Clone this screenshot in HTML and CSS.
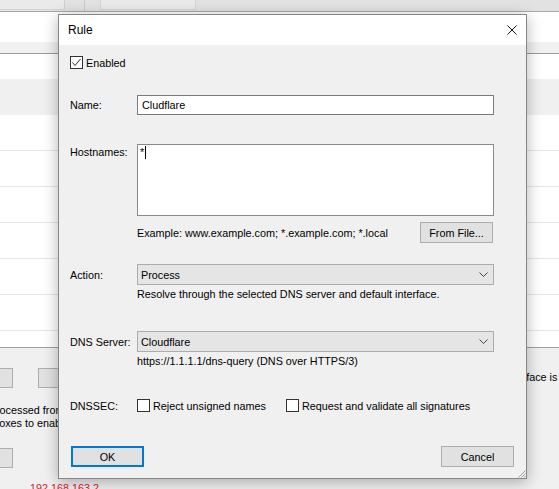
FILE: index.html
```html
<!DOCTYPE html>
<html>
<head>
<meta charset="utf-8">
<title>Rule</title>
<link rel="stylesheet" href="styles.css">
</head>
<body>
<div class="app">
  <div class="tabs">
    <div class="tab tab-a"></div>
    <div class="tab-sep"></div>
    <div class="tab tab-b"></div>
  </div>
  <div class="toolbar"></div>
  <div class="list-head"></div>
  <div class="row-first"></div>
  <div class="row-alt"></div>
  <div class="row"></div>
  <div class="row"></div>
  <div class="row"></div>
  <div class="row"></div>
  <div class="row"></div>
  <div class="row"></div>
  <div class="list-end"></div>
  <div class="panel">
    <div class="panel-left">
      <div class="pbtn-row">
        <div class="pbtn pbtn-cut"></div>
        <div class="pbtn"></div>
      </div>
      <div class="ptext-wrap">
        <div class="ptext ptext-1">processed from</div>
        <div class="ptext ptext-2">checkboxes to enable</div>
      </div>
      <div class="pbtn pbtn-cut pbtn-low"></div>
      <div class="ip">192.168.163.2</div>
    </div>
    <div class="panel-right">Default interface is currently set</div>
  </div>
</div>

<div class="dialog">
  <div class="titlebar">
    <span class="title">Rule</span>
    <svg class="close" width="10" height="10" viewBox="0 0 10 10"><path d="M0.5 0.5 L9.5 9.5 M9.5 0.5 L0.5 9.5" stroke="#111" stroke-width="1" fill="none"/></svg>
  </div>
  <div class="dbody">
    <div class="check-row">
      <span class="cb"><svg width="13" height="13" viewBox="0 0 13 13"><polyline points="2.5,6.5 5,9.5 10.5,3" fill="none" stroke="#333" stroke-width="1"/></svg></span>
      <span>Enabled</span>
    </div>
    <div class="frow name-row">
      <span class="lbl">Name:</span>
      <div class="input">Cludflare</div>
    </div>
    <div class="frow host-row">
      <span class="lbl lbl-top">Hostnames:</span>
      <div class="textarea"><span>*</span><span class="caret"></span></div>
    </div>
    <div class="hint-row">
      <span>Example: www.example.com; *.example.com; *.local</span>
      <div class="btn btn-file">From File...</div>
    </div>
    <div class="frow action-row">
      <span class="lbl">Action:</span>
      <div class="select"><span>Process</span><svg class="chev" width="9" height="5" viewBox="0 0 9 5"><polyline points="0.5,0.5 4.5,4.5 8.5,0.5" fill="none" stroke="#444" stroke-width="1"/></svg></div>
    </div>
    <div class="desc">Resolve through the selected DNS server and default interface.</div>
    <div class="frow dns-row">
      <span class="lbl">DNS Server:</span>
      <div class="select"><span>Cloudflare</span><svg class="chev" width="9" height="5" viewBox="0 0 9 5"><polyline points="0.5,0.5 4.5,4.5 8.5,0.5" fill="none" stroke="#444" stroke-width="1"/></svg></div>
    </div>
    <div class="desc">https://1.1.1.1/dns-query (DNS over HTTPS/3)</div>
    <div class="frow dnssec-row">
      <span class="lbl">DNSSEC:</span>
      <div class="cgroup cgroup-1"><span class="cb"></span><span>Reject unsigned names</span></div>
      <div class="cgroup"><span class="cb"></span><span>Request and validate all signatures</span></div>
    </div>
    <div class="buttons">
      <div class="btn btn-ok">OK</div>
      <div class="btn">Cancel</div>
    </div>
  </div>
  <svg class="grip" width="9" height="9" viewBox="0 0 9 9"><path d="M8.5 1.5 L1.5 8.5 M8.5 4.5 L4.5 8.5 M8.5 7 L7 8.5" stroke="#a0a0a0" stroke-width="1" fill="none"/></svg>
</div>
</body>
</html>
```

FILE: styles.css
```css
html, body {
  margin: 0;
  padding: 0;
}
body {
  width: 559px;
  height: 489px;
  overflow: hidden;
  position: relative;
  font-family: "Liberation Sans", Arial, sans-serif;
  font-size: 10.8px;
  color: #000;
  background: #f0f0f0;
}

/* background application window */
.app {
  width: 559px;
  height: 489px;
  display: flex;
  flex-direction: column;
}
.tabs {
  height: 11px;
  background: #e2e2e2;
  border-bottom: 1px solid #a8a8a8;
  display: flex;
  flex: none;
}
.tab {
  height: 9px;
  background: #eaeaea;
  border-bottom: 1px solid #d6d6d6;
}
.tab-a { width: 64px; border-right: 1px solid #d0d0d0; }
.tab-sep { width: 1px; height: 11px; margin-left: 19px; background: #c9c9c9; }
.tab-b { width: 94px; margin-left: 15px; border-left: 1px solid #d6d6d6; border-right: 1px solid #d6d6d6; }
.toolbar { height: 30px; background: #fff; flex: none; }
.list-head {
  height: 11px;
  background: #f1f1f1;
  border-bottom: 1px solid #9a9a9a;
  flex: none;
}
.row-first { height: 25px; background: #fff; flex: none; }
.row-alt { height: 36px; background: #f0f0f0; flex: none; }
.row {
  height: 36px;
  box-sizing: border-box;
  background: #fff;
  border-bottom: 1px solid #e6e6e6;
  flex: none;
}
.list-end { height: 16px; background: #fff; flex: none; }
.panel {
  flex: 1;
  border-top: 1px solid #a0a0a0;
  background: #f0f0f0;
  display: flex;
}
.panel-left {
  width: 468px;
  flex: none;
  padding-top: 20px;
  display: flex;
  flex-direction: column;
}
.pbtn-row { display: flex; gap: 25px; }
.pbtn {
  width: 75px;
  height: 20px;
  box-sizing: border-box;
  background: #e1e1e1;
  border: 1px solid #adadad;
}
.pbtn-cut { margin-left: -62px; }
.ptext-wrap {
  width: 58px;
  overflow: hidden;
  margin-top: 16px;
}
.ptext { line-height: 13px; white-space: nowrap; }
.ptext-1 { margin-left: -10px; }
.ptext-2 { margin-left: -35px; }
.pbtn-low { margin-top: 18px; }
.ip {
  margin-top: 14px;
  margin-left: 30px;
  line-height: 13px;
  color: #e0161b;
}
.panel-right {
  margin-top: 23px;
  line-height: 13px;
  white-space: nowrap;
}

/* dialog window */
.dialog {
  position: absolute;
  left: 58px;
  top: 14px;
  width: 469px;
  height: 465px;
  box-sizing: border-box;
  border: 1px solid #878787;
  background: #f0f0f0;
  box-shadow: 0 3px 14px rgba(0, 0, 0, 0.30);
  display: flex;
  flex-direction: column;
}
.titlebar {
  height: 30px;
  flex: none;
  background: #fff;
  display: flex;
  align-items: center;
  justify-content: space-between;
  padding: 0 9px;
}
.title { font-size: 12px; }
.close { display: block; margin-top: -1px; }
.dbody {
  flex: 1;
  padding: 11px 12px 0 11px;
  display: flex;
  flex-direction: column;
}
.check-row {
  height: 13px;
  display: flex;
  align-items: center;
  gap: 3px;
}
.cb {
  width: 13px;
  height: 13px;
  box-sizing: border-box;
  border: 1px solid #333;
  background: #fff;
  flex: none;
  position: relative;
}
.cb svg { position: absolute; left: -1px; top: -1px; }
.frow { display: flex; align-items: center; }
.lbl { width: 67px; flex: none; white-space: nowrap; }
.name-row { margin-top: 26px; height: 20px; }
.input {
  width: 357px;
  height: 20px;
  box-sizing: border-box;
  border: 1px solid #7a7a7a;
  background: #fff;
  padding-left: 4px;
  display: flex;
  align-items: center;
}
.host-row { margin-top: 29px; height: 72px; align-items: flex-start; }
.lbl-top { line-height: 14px; padding-top: 1px; }
.textarea {
  width: 357px;
  height: 72px;
  box-sizing: border-box;
  border: 1px solid #8a8a8a;
  background: #fff;
  padding: 1px 2px;
  line-height: 13px;
  display: flex;
  align-items: flex-start;
}
.caret {
  width: 1px;
  height: 13px;
  background: #000;
  margin-left: 1px;
}
.hint-row {
  margin-top: 6px;
  height: 21px;
  width: 424px;
  box-sizing: border-box;
  padding-left: 67px;
  display: flex;
  align-items: center;
  justify-content: space-between;
}
.btn {
  width: 73px;
  height: 21px;
  box-sizing: border-box;
  background: #e1e1e1;
  border: 1px solid #adadad;
  display: flex;
  align-items: center;
  justify-content: center;
}
.btn-file { margin-right: 1px; }
.action-row { margin-top: 21px; height: 21px; }
.dns-row { margin-top: 30px; height: 21px; }
.select {
  width: 357px;
  height: 21px;
  box-sizing: border-box;
  background: #e5e5e5;
  border: 1px solid #acacac;
  padding: 0 5px 0 3px;
  display: flex;
  align-items: center;
  justify-content: space-between;
}
.chev { display: block; }
.desc {
  margin-top: 2px;
  margin-left: 67px;
  line-height: 14px;
  white-space: nowrap;
}
.dnssec-row { margin-top: 31px; height: 13px; }
.cgroup {
  display: flex;
  align-items: center;
  gap: 3px;
  white-space: nowrap;
}
.cgroup-1 { width: 149px; flex: none; }
.buttons {
  margin-top: 34px;
  display: flex;
  justify-content: space-between;
}
.btn-ok {
  margin-left: 1px;
  border: 2px solid #0078d7;
}
.grip {
  position: absolute;
  right: 0;
  bottom: 0;
  display: block;
}
```
